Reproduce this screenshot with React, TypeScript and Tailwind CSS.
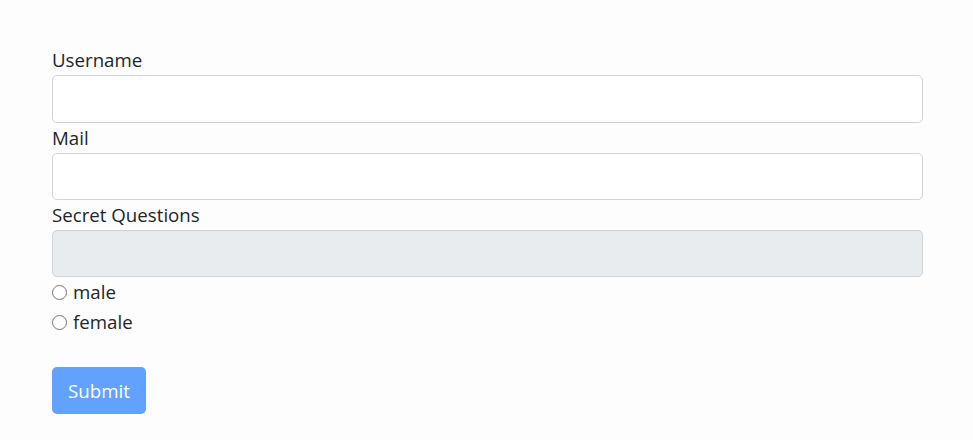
import { useState } from "react";

export default function App() {
  const [username, setUsername] = useState("");
  const [mail, setMail] = useState("");
  const [gender, setGender] = useState("");

  return (
    <div className="min-h-screen bg-[#fdfdfd] pl-[52px] pr-[50px] pt-[45px] text-[18.7px] leading-[30px] text-[#212529] font-['Open_Sans',sans-serif]">
      <form onSubmit={e => e.preventDefault()}>
        <label htmlFor="username" className="block">Username</label>
        <input
          id="username"
          type="text"
          value={username}
          onChange={e => setUsername(e.target.value)}
          className="block h-[48px] w-full rounded-[5px] border border-[#ced4da] bg-white px-4 outline-none"
        />

        <label htmlFor="mail" className="block">Mail</label>
        <input
          id="mail"
          type="email"
          value={mail}
          onChange={e => setMail(e.target.value)}
          className="block h-[47px] w-full rounded-[5px] border border-[#ced4da] bg-white px-4 outline-none"
        />

        <label htmlFor="secret" className="block">Secret Questions</label>
        <input
          id="secret"
          type="text"
          disabled
          className="block h-[47px] w-full rounded-[5px] border border-[#ced4da] bg-[#e9ecef] px-4 outline-none"
        />

        <div className="flex flex-col">
          {["male", "female"].map(g => (
            <label key={g} className="flex h-[30px] items-center">
              <input
                type="radio"
                name="gender"
                value={g}
                checked={gender === g}
                onChange={() => setGender(g)}
                className="m-0 h-[15px] w-[15px] appearance-none rounded-full border border-[#767676] bg-white checked:border-[5px] checked:border-[#0d6efd]"
              />
              <span className="ml-[6px]">{g}</span>
            </label>
          ))}
        </div>

        <button
          type="submit"
          disabled
          className="mt-[30px] h-[47px] rounded-[5px] bg-[#62a1fe] px-[16px] text-white"
        >
          Submit
        </button>
      </form>
    </div>
  );
}
